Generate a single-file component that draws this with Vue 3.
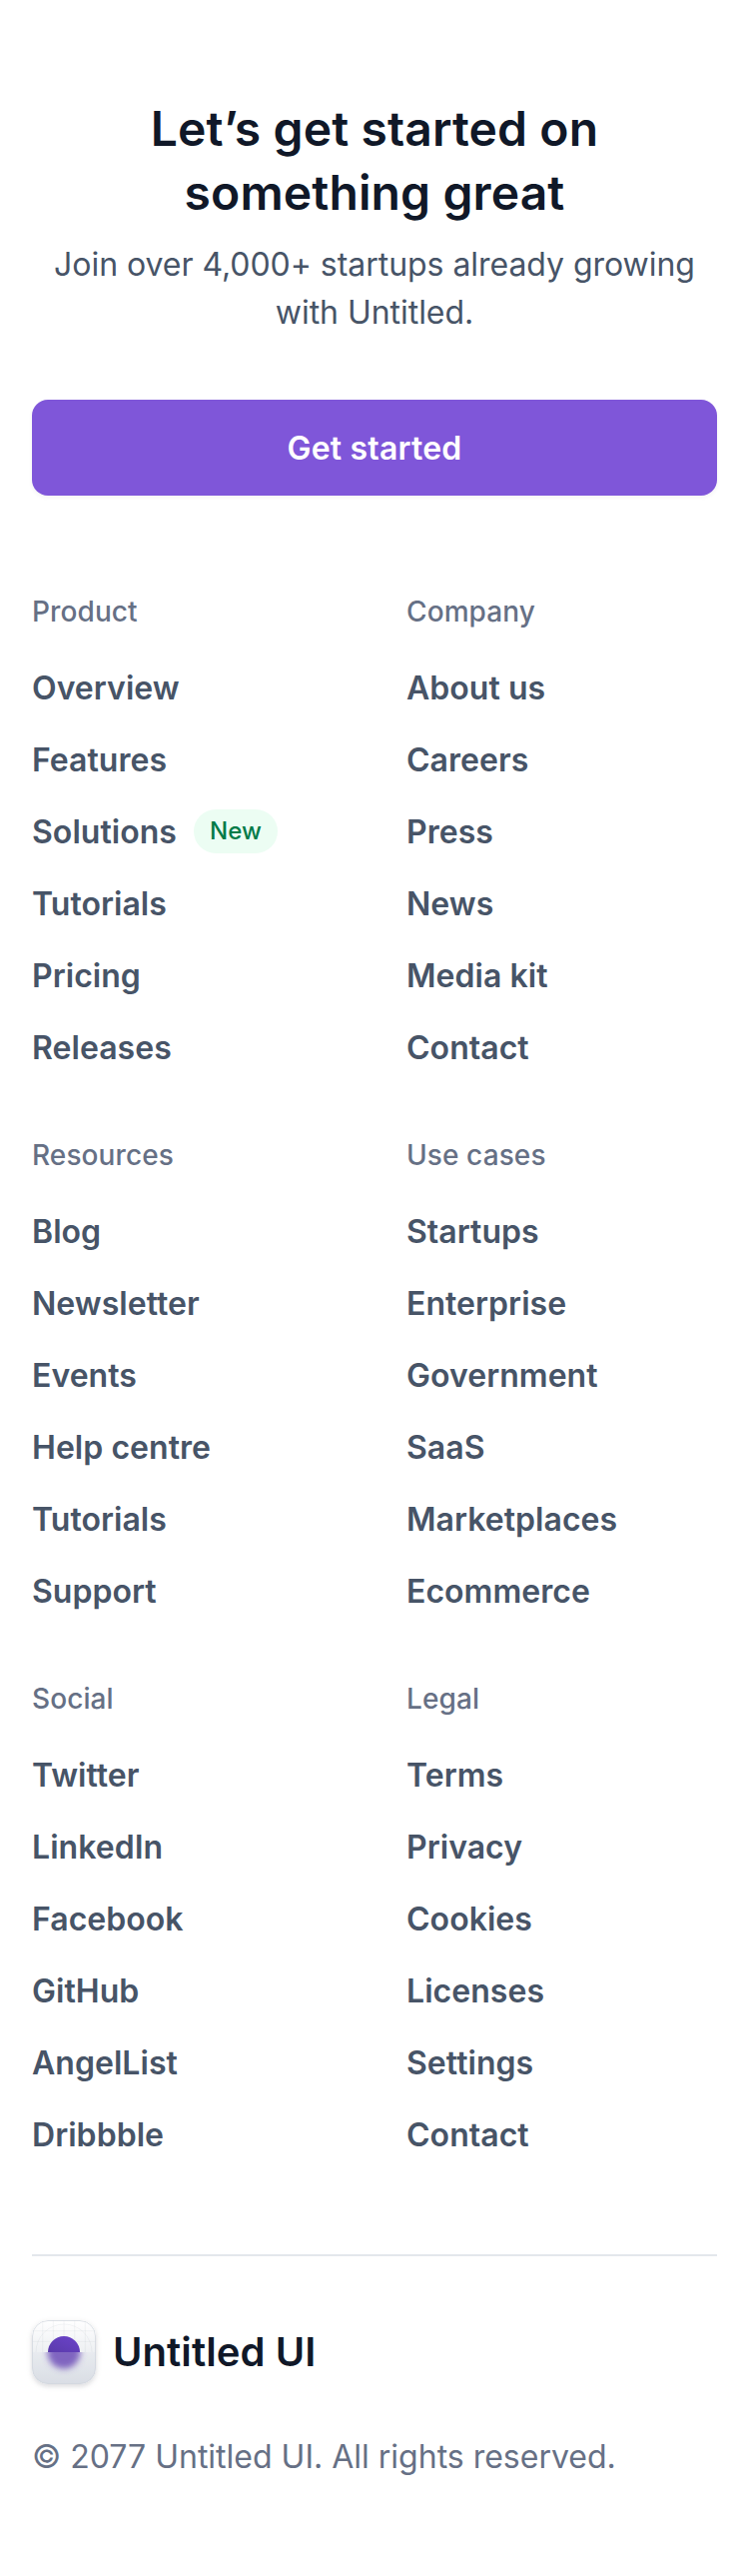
<script setup>
const groups = [
  { title: 'Product', links: ['Overview', 'Features', 'Solutions', 'Tutorials', 'Pricing', 'Releases'], badge: 'Solutions' },
  { title: 'Company', links: ['About us', 'Careers', 'Press', 'News', 'Media kit', 'Contact'] },
  { title: 'Resources', links: ['Blog', 'Newsletter', 'Events', 'Help centre', 'Tutorials', 'Support'] },
  { title: 'Use cases', links: ['Startups', 'Enterprise', 'Government', 'SaaS', 'Marketplaces', 'Ecommerce'] },
  { title: 'Social', links: ['Twitter', 'LinkedIn', 'Facebook', 'GitHub', 'AngelList', 'Dribbble'] },
  { title: 'Legal', links: ['Terms', 'Privacy', 'Cookies', 'Licenses', 'Settings', 'Contact'] },
]
const gridLines = [10.67, 21.33, 32, 42.67, 53.33]
</script>

<template>
  <footer class="footer">
    <section class="cta">
      <h2 class="cta-title">Let’s get started on<br />something great</h2>
      <p class="cta-text">Join over 4,000+ startups already growing<br />with Untitled.</p>
      <button class="cta-button" type="button">Get started</button>
    </section>

    <nav class="groups">
      <section v-for="group in groups" :key="group.title" class="group">
        <h3 class="group-title">{{ group.title }}</h3>
        <ul class="links">
          <li v-for="link in group.links" :key="link" class="link-row">
            <a class="link">{{ link }}</a>
            <span v-if="group.badge === link" class="badge">New</span>
          </li>
        </ul>
      </section>
    </nav>

    <div class="bottom">
      <div class="brand">
        <svg class="mark" viewBox="0 0 64 64" width="64" height="64" aria-hidden="true">
          <defs>
            <linearGradient id="tile" x1="0" y1="0" x2="0" y2="1">
              <stop offset="0" stop-color="#fff" />
              <stop offset="1" stop-color="#dce0e6" />
            </linearGradient>
            <linearGradient id="dot" x1="0.7" y1="0" x2="0.3" y2="1">
              <stop offset="0" stop-color="#6941c6" />
              <stop offset="1" stop-color="#53389e" />
            </linearGradient>
            <clipPath id="upper"><rect width="64" height="32" /></clipPath>
            <clipPath id="lower"><rect y="32" width="64" height="32" /></clipPath>
            <filter id="soft" x="-50%" y="-50%" width="200%" height="200%">
              <feGaussianBlur stdDeviation="3" />
            </filter>
          </defs>
          <rect width="64" height="64" rx="16" fill="url(#tile)" />
          <g clip-path="url(#upper)" fill="none" stroke="#475467" stroke-opacity="0.055">
            <path v-for="x in gridLines" :key="'v' + x" :d="`M${x} 0V32`" />
            <path v-for="y in gridLines.slice(0, 2)" :key="'h' + y" :d="`M0 ${y}H64`" />
            <circle cx="32" cy="32" r="28" />
            <circle cx="32" cy="32" r="16" fill="url(#dot)" stroke="none" />
          </g>
          <g clip-path="url(#lower)">
            <rect y="32" width="64" height="32" fill="#d0d5dd" fill-opacity="0.16" />
            <circle cx="32" cy="32" r="16.5" fill="#6340b4" fill-opacity="0.78" filter="url(#soft)" />
          </g>
          <rect x="0.5" y="0.5" width="63" height="63" rx="15.5" fill="none" stroke="#d0d5dd" stroke-opacity="0.75" />
        </svg>
        <span class="wordmark">Untitled UI</span>
      </div>
      <p class="copyright">© 2077 Untitled UI. All rights reserved.</p>
    </div>
  </footer>
</template>

<style>
body {
  margin: 0;
  background: #fff;
}
</style>

<style scoped>
.footer {
  box-sizing: border-box;
  width: 750px;
  height: 2578px;
  padding: 97px 32px 95px;
  background: #fff;
  font-family: Inter, "Liberation Sans", sans-serif;
  font-size: 32px;
  line-height: 48px;
  color: #475467;
}
h2, h3, p, ul {
  margin: 0;
  padding: 0;
}
.cta {
  display: flex;
  flex-direction: column;
  text-align: center;
}
.cta-title {
  font-size: 48px;
  line-height: 64px;
  font-weight: 600;
  letter-spacing: 0.12px;
  color: #101828;
}
.cta-text {
  margin-top: 16px;
  letter-spacing: -0.04px;
}
.cta-button {
  height: 96px;
  margin-top: 63px;
  padding: 2px 0 0;
  border: 0;
  border-radius: 16px;
  background: #7f56d9;
  box-shadow: 0 2px 4px rgba(16, 24, 40, 0.05);
  color: #fff;
  font: inherit;
  font-weight: 600;
  letter-spacing: 0.2px;
}
.groups {
  display: grid;
  grid-template-columns: 1fr 1fr;
  gap: 64px;
  margin-top: 96px;
}
.group-title {
  margin-bottom: 32px;
  font-size: 28px;
  line-height: 40px;
  font-weight: 500;
  letter-spacing: 0.1px;
  color: #667085;
}
.links {
  display: grid;
  gap: 24px;
  list-style: none;
}
.link-row {
  display: flex;
  align-items: center;
  gap: 17px;
  height: 48px;
}
.link {
  padding-top: 2px;
  font-weight: 600;
  letter-spacing: 0.04px;
}
.badge {
  padding: 4px 16px;
  border-radius: 22px;
  background: #ecfdf3;
  color: #027a48;
  font-size: 24px;
  line-height: 36px;
  font-weight: 500;
  letter-spacing: 0.1px;
}
.bottom {
  margin-top: 96px;
  padding-top: 64px;
  border-top: 2px solid #e4e7ec;
}
.brand {
  display: flex;
  align-items: center;
  gap: 17px;
  height: 64px;
}
.mark {
  border-radius: 16px;
  box-shadow: 0 2px 6px rgba(16, 24, 40, 0.1), 0 2px 4px rgba(16, 24, 40, 0.06);
}
.wordmark {
  font-size: 40px;
  font-weight: 600;
  letter-spacing: 0.1px;
  color: #101828;
}
.copyright {
  margin-top: 49px;
  color: #667085;
}
</style>
